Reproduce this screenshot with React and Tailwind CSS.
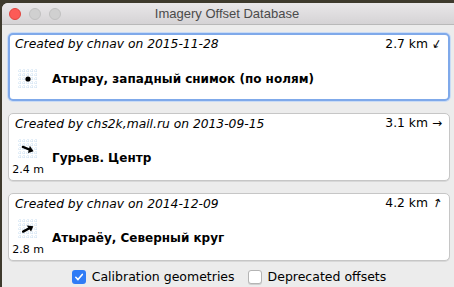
import React from "react";

const F = { fontFamily: '"DejaVu Sans", Verdana, sans-serif' };

function Grid({ children }) {
  const lines = [2, 6, 10, 14, 18];
  return (
    <svg width="20" height="20" viewBox="0 0 20 20" className="block">
      {lines.map((p) => (
        <g key={p}>
          <line x1={p} y1="0" x2={p} y2="20" stroke="#c9def1" strokeWidth="1" strokeDasharray="1 1" />
          <line x1="0" y1={p} x2="20" y2={p} stroke="#c9def1" strokeWidth="1" strokeDasharray="1 1" />
        </g>
      ))}
      {children}
    </svg>
  );
}

function ArrowIcon({ angle }) {
  return (
    <Grid>
      <g transform={`rotate(${angle} 10 10)`}>
        <line x1="4.5" y1="10" x2="12" y2="10" stroke="#000" strokeWidth="2.4" strokeLinecap="round" />
        <polygon points="16,10 10.5,6.4 11.5,13.6" fill="#000" />
      </g>
    </Grid>
  );
}

function DotIcon() {
  return (
    <Grid>
      <circle cx="10" cy="10" r="2.6" fill="#000" />
    </Grid>
  );
}

function Card({ focused, header, dist, arrowAngle, icon, label, title }) {
  return (
    <div
      className={
        "h-[68px] w-[442px] shrink-0 bg-white rounded-[5px] flex flex-col " +
        (focused
          ? "border-2 border-[#7fa9ea] shadow-[0_0_0_1px_#c9dbf5]"
          : "border border-[#c6c6c6] shadow-[0_1px_0_#d8d8d8]")
      }
    >
      <div
        className={
          "flex justify-between h-[16px] leading-[16px] text-[12.3px] text-black " +
          (focused ? "pt-[1px] pl-[5px] pr-[6px]" : "pt-[2px] pl-[6px] pr-[7px]")
        }
        style={F}
      >
        <span className="italic whitespace-nowrap">{header}</span>
        <span className="flex items-center whitespace-nowrap">
          {dist}
          <span
            className="inline-block ml-[4px] text-[12px] leading-[12px]"
            style={{ transform: `rotate(${arrowAngle}deg)` }}
          >
            →
          </span>
        </span>
      </div>
      <div className={"flex-1 flex items-center " + (focused ? "pt-[8px] pl-[3px]" : "pt-[6px] pl-[4px]")}>
        <div className="w-[30px] shrink-0 flex flex-col items-center">
          {icon}
          {label && (
            <div className="mt-[4px] text-[11px] leading-[14px] text-black whitespace-nowrap" style={F}>
              {label}
            </div>
          )}
        </div>
        <div className="ml-[9px] text-[12px] font-bold text-black whitespace-nowrap" style={F}>
          {title}
        </div>
      </div>
    </div>
  );
}

function Check({ checked }) {
  return checked ? (
    <span className="block shrink-0 w-[14px] h-[14px] rounded-[3px] bg-[#2f7cf6] flex items-center justify-center">
      <svg width="10" height="10" viewBox="0 0 10 10">
        <path d="M1.8 5.3 L4 7.6 L8.3 2.4" fill="none" stroke="#fff" strokeWidth="1.6" strokeLinecap="round" strokeLinejoin="round" />
      </svg>
    </span>
  ) : (
    <span className="block shrink-0 w-[14px] h-[14px] rounded-[3px] bg-white border border-[#b4b4b4] shadow-[0_1px_0_#d0d0d0]" />
  );
}

export default function App() {
  return (
    <div className="w-[454px] h-[287px] bg-[#3e3a2d] overflow-hidden pl-[2px] pt-[3px] flex">
      <div className="flex-1 bg-[#ececec] rounded-tl-[6px] flex flex-col overflow-hidden">
        <div className="h-[22px] shrink-0 bg-gradient-to-b from-[#e9e7e9] to-[#d5d3d5] border-b border-[#b9b9b9] flex items-center relative">
          <div className="flex items-center gap-[8px] pl-[7px]">
            <span className="w-[12px] h-[12px] rounded-full bg-[#fc5b57] border border-[#e0443e]" />
            <span className="w-[12px] h-[12px] rounded-full bg-[#d0d0d0] border border-[#c0c0c0]" />
            <span className="w-[12px] h-[12px] rounded-full bg-[#d0d0d0] border border-[#c0c0c0]" />
          </div>
          <div
            className="absolute inset-0 flex items-center justify-center text-[13px] text-[#4b4b4b]"
            style={{ fontFamily: '"Liberation Sans", Arial, sans-serif' }}
          >
            <span className="pr-[2px]">Imagery Offset Database</span>
          </div>
        </div>
        <div className="pl-[6px] pt-[8px] flex flex-col gap-[12px]">
          <Card
            focused
            header="Created by chnav on 2015-11-28"
            dist="2.7 km"
            arrowAngle={120}
            icon={<DotIcon />}
            title="Атырау, западный снимок (по нолям)"
          />
          <Card
            header="Created by chs2k,mail.ru on 2013-09-15"
            dist="3.1 km"
            arrowAngle={0}
            icon={<ArrowIcon angle={22} />}
            label="2.4 m"
            title="Гурьев. Центр"
          />
          <Card
            header="Created by chnav on 2014-12-09"
            dist="4.2 km"
            arrowAngle={-72}
            icon={<ArrowIcon angle={-28} />}
            label="2.8 m"
            title="Атыраёу, Северный круг"
          />
        </div>
        <div className="flex-1 pl-[6px] pt-[6px] flex items-center">
          <div className="w-[442px] flex justify-center items-center text-[12.5px] text-black" style={F}>
            <Check checked />
            <span className="ml-[6px]">Calibration geometries</span>
            <span className="ml-[13px]">
              <Check />
            </span>
            <span className="ml-[6px]">Deprecated offsets</span>
          </div>
        </div>
      </div>
    </div>
  );
}
